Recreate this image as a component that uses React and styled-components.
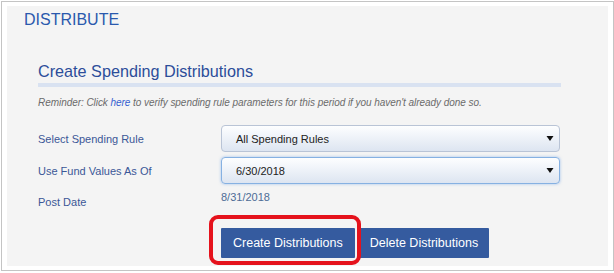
import styled, { createGlobalStyle } from 'styled-components'

const Global = createGlobalStyle`
  html, body {
    margin: 0;
    padding: 0;
    background: #ffffff;
    font-family: "Liberation Sans", Arial, sans-serif;
  }
`

const Frame = styled.div`
  margin: 1px 0 0 1px;
  width: 601px;
  height: 260px;
  padding: 4px 5px 4px 5px;
  border: 1px solid #c4c4c4;
  background: #fff;
  box-shadow: 2px 2px 2px rgba(0,0,0,0.35);
`

const Panel = styled.div`
  background: #f4f4f4;
  height: 100%;
  box-sizing: border-box;
  padding: 5px 17px 0;
`

const PageTitle = styled.h1`
  margin: 0;
  font-size: 16px;
  line-height: 18px;
  font-weight: normal;
  color: #2a59ad;
`

const Section = styled.section`
  margin: 33px 0 0 14px;
  width: 523px;
`

const SectionTitle = styled.h2`
  margin: 0;
  font-size: 16.2px;
  line-height: 18px;
  font-weight: normal;
  color: #2c4d9a;
`

const Rule = styled.div`
  height: 4px;
  margin-top: 3px;
  background: #d9e2f1;
`

const Reminder = styled.p`
  margin: 10px 0 0;
  font-size: 10px;
  letter-spacing: -0.05px;
  line-height: 12px;
  font-style: italic;
  color: #6b6b6b;

  a {
    color: #3560d0;
    text-decoration: none;
  }
`

const Form = styled.div`
  margin-top: 16px;
  display: flex;
  flex-direction: column;
  gap: 5px;
`

const Row = styled.div`
  display: flex;
  align-items: ${p => (p.$top ? 'flex-start' : 'center')};
`

const Label = styled.div`
  width: 183px;
  font-size: 11px;
  line-height: 14px;
  color: #3b5797;
  padding-top: ${p => p.$offset || 0}px;
`

const Select = styled.div`
  width: 339px;
  height: 27px;
  box-sizing: border-box;
  display: flex;
  align-items: center;
  justify-content: space-between;
  padding: 0 5px 0 14px;
  border: 1px solid ${p => (p.$focus ? '#86b1e2' : '#b9c4d6')};
  border-radius: 4px;
  background: linear-gradient(#fdfeff, #dde5f1);
  box-shadow: ${p => (p.$focus ? '0 0 3px rgba(90,150,230,0.55)' : 'none')};
  font-size: 11px;
  color: #222;
`

const Value = styled.div`
  margin-top: 1px;
  font-size: 11px;
  line-height: 14px;
  color: #4d6c96;
`

const Actions = styled.div`
  margin: 19px 0 0 183px;
  display: flex;
  gap: 4px;
  position: relative;
`

const Button = styled.button`
  height: 30px;
  padding: 0 ${p => p.$pad}px;
  border: none;
  border-radius: 1px;
  background: #355b9f;
  color: #ffffff;
  font-family: "Liberation Sans", Arial, sans-serif;
  font-size: 12.5px;
`

const Highlight = styled.div`
  position: absolute;
  left: -12px;
  top: -13px;
  width: 144px;
  height: 42px;
  border: 4px solid #e5121c;
  border-radius: 9px;
  pointer-events: none;
`

function Caret() {
  return (
    <svg width="8" height="7" viewBox="0 0 8 7">
      <path d="M0.5 1 L7.5 1 L4 6 Z" fill="#111" />
    </svg>
  )
}

export default function App() {
  return (
    <>
      <Global />
      <Frame>
        <Panel>
          <PageTitle>DISTRIBUTE</PageTitle>
          <Section>
            <SectionTitle>Create Spending Distributions</SectionTitle>
            <Rule />
            <Reminder>
              Reminder: Click <a href="#">here</a> to verify spending rule parameters for this period if you haven't already done so.
            </Reminder>
            <Form>
              <Row>
                <Label>Select Spending Rule</Label>
                <Select>
                  <span>All Spending Rules</span>
                  <Caret />
                </Select>
              </Row>
              <Row>
                <Label>Use Fund Values As Of</Label>
                <Select $focus>
                  <span>6/30/2018</span>
                  <Caret />
                </Select>
              </Row>
              <Row $top>
                <Label $offset={6}>Post Date</Label>
                <Value>8/31/2018</Value>
              </Row>
            </Form>
            <Actions>
              <Button $pad={12}>Create Distributions</Button>
              <Button $pad={11}>Delete Distributions</Button>
              <Highlight />
            </Actions>
          </Section>
        </Panel>
      </Frame>
    </>
  )
}
